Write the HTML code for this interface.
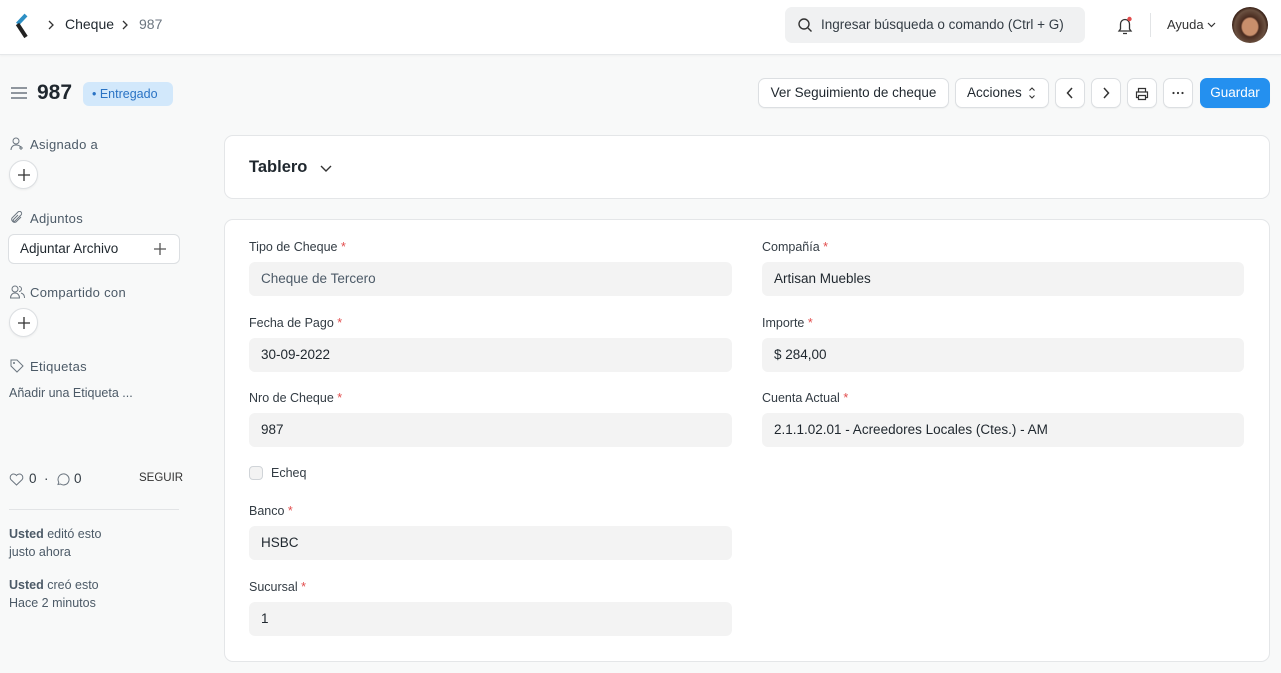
<!DOCTYPE html>
<html><head><meta charset="utf-8"><style>
*{box-sizing:border-box;margin:0;padding:0}
body{width:1281px;height:673px;overflow:hidden;background:#f8f9f9;font-family:"Liberation Sans",sans-serif;color:#1f272e;font-size:13px;position:relative}
.abs{position:absolute}
.nav{left:0;top:0;width:1281px;height:55px;background:#fff;border-bottom:1px solid #e6e8ea;box-shadow:0 1px 2px rgba(0,0,0,.04)}
.search{left:785px;top:7px;width:300px;height:36px;background:#f0f1f2;border-radius:7px;color:#333c44;font-size:13.5px;line-height:36px;padding-left:36px}
.btn{position:absolute;top:78px;height:30px;background:#fff;border:1px solid #dcdfe2;border-radius:7px;font-size:13.5px;line-height:28px;text-align:center;color:#1f272e;box-shadow:0 1px 1px rgba(0,0,0,.04)}
.btn svg{display:block;margin:8px auto 0}
.card{position:absolute;background:#fff;border:1px solid #e4e6e8;border-radius:9px}
.lbl{position:absolute;font-size:12.5px;color:#333c44}
.lbl b{color:#e24c4c;font-weight:normal}
.inp{position:absolute;height:34px;width:483px;background:#f3f3f3;border-radius:6px;font-size:13.5px;line-height:34px;padding-left:12px;color:#1f272e}
.side{position:absolute;left:9px;font-size:13px;color:#4c5a67;letter-spacing:.3px}
.circ{position:absolute;left:9px;width:29px;height:29px;border-radius:50%;background:#fff;border:1px solid #dcdfe2;box-shadow:0 1px 2px rgba(0,0,0,.06)}
.circ svg{display:block;margin:8px auto 0}
.sm{position:absolute;left:9px;font-size:12.5px;color:#4c5a67;line-height:18px}
</style></head><body>
<div class="abs nav"></div>
<svg class="abs" style="left:14px;top:13px" width="16" height="26" viewBox="0 0 16 26"><path d="M12 2 L3.5 11" stroke="#2d8fc4" stroke-width="4" fill="none"/><path d="M3.5 11 L12 24" stroke="#222" stroke-width="4" fill="none"/></svg>
<svg class="abs" style="left:47px;top:20px" width="8" height="10"><path d="M2 1l4 4-4 4" stroke="#333" stroke-width="1.3" fill="none"/></svg>
<div class="abs" style="left:65px;top:16px;font-size:14px;color:#1f272e">Cheque</div>
<svg class="abs" style="left:121px;top:20px" width="8" height="10"><path d="M2 1l4 4-4 4" stroke="#333" stroke-width="1.3" fill="none"/></svg>
<div class="abs" style="left:139px;top:16px;font-size:14px;color:#6c7680">987</div>
<div class="abs search">Ingresar búsqueda o comando (Ctrl + G)</div>
<svg class="abs" style="left:797px;top:17px" width="16" height="16" viewBox="0 0 16 16"><circle cx="7" cy="7" r="5" stroke="#333" stroke-width="1.4" fill="none"/><path d="M11 11l3.5 3.5" stroke="#333" stroke-width="1.4"/></svg>
<svg class="abs" style="left:1115px;top:15px" width="20" height="22" viewBox="0 0 20 22"><path d="M4 16 L5.5 14 V9 a4.5 4.5 0 0 1 9 0 V14 L16 16 Z M8 18.5 h4" stroke="#333" stroke-width="1.3" fill="none"/><circle cx="14.5" cy="4" r="2.2" fill="#e24c4c"/></svg>
<div class="abs" style="left:1150px;top:13px;width:1px;height:24px;background:#e2e4e6"></div>
<div class="abs" style="left:1167px;top:17px;font-size:13px;color:#333">Ayuda</div>
<svg class="abs" style="left:1207px;top:22px" width="9" height="6"><path d="M1 1l3.5 3.5L8 1" stroke="#333" stroke-width="1.2" fill="none"/></svg>
<div class="abs" style="left:1232px;top:7px;width:36px;height:36px;border-radius:50%;background:radial-gradient(ellipse at 50% 55%,#c98f6c 0 30%,#4a2c20 36%,#6a5040 60%,#3a2218 70%)"></div>

<svg class="abs" style="left:11px;top:86px" width="16" height="14"><path d="M0 2h16M0 7h16M0 12h16" stroke="#6c7680" stroke-width="1.5"/></svg>
<div class="abs" style="left:37px;top:81px;font-size:21px;font-weight:bold;color:#1f272e">987</div>
<div class="abs" style="left:83px;top:82px;width:90px;height:24px;background:#d2e8fb;border-radius:6px;color:#2a73c4;font-size:12.5px;line-height:24px;padding-left:9px">• Entregado</div>

<div class="btn" style="left:758px;width:191px">Ver Seguimiento de cheque</div>
<div class="btn" style="left:955px;width:94px;text-align:left;padding-left:11px">Acciones<svg style="position:absolute;left:72px;top:0;margin:0" width="8" height="28"><path d="M1.5 11.5l2.5-2.5 2.5 2.5M1.5 16.5l2.5 2.5 2.5-2.5" stroke="#333" stroke-width="1.1" fill="none"/></svg></div>
<div class="btn" style="left:1055px;width:30px"><svg width="8" height="12"><path d="M6 1L1.5 6 6 11" stroke="#333" stroke-width="1.5" fill="none"/></svg></div>
<div class="btn" style="left:1091px;width:30px"><svg width="8" height="12"><path d="M2 1l4.5 5L2 11" stroke="#333" stroke-width="1.5" fill="none"/></svg></div>
<div class="btn" style="left:1127px;width:30px"><svg width="14" height="14" viewBox="0 0 14 14"><path d="M3.5 5V1.5h7V5M3.5 10.5H1.5V5h11v5.5h-2M3.5 8.5h7v4h-7z" stroke="#333" stroke-width="1.2" fill="none"/></svg></div>
<div class="btn" style="left:1163px;width:30px"><svg width="14" height="12"><circle cx="2.5" cy="6" r="1.1" fill="#333"/><circle cx="7" cy="6" r="1.1" fill="#333"/><circle cx="11.5" cy="6" r="1.1" fill="#333"/></svg></div>
<div class="btn" style="left:1200px;width:70px;background:#2490ef;border-color:#2490ef;color:#fff">Guardar</div>

<svg class="abs" style="left:10px;top:137px" width="14" height="14" viewBox="0 0 14 14"><circle cx="6" cy="4" r="3" stroke="#6c7680" fill="none"/><path d="M1 13c0-3 2-5 5-5s4 1 4.5 2M11 9v4M9 11h4" stroke="#6c7680" fill="none"/></svg>
<div class="side" style="left:30px;top:137px">Asignado a</div>
<div class="circ" style="top:160px"><svg width="12" height="12"><path d="M6 0v12M0 6h12" stroke="#333" stroke-width="1.3"/></svg></div>
<svg class="abs" style="left:10px;top:211px" width="14" height="14" viewBox="0 0 14 14"><path d="M11 6L6 11a3 3 0 0 1-4-4l6-6a2 2 0 0 1 3 3L5 10a1 1 0 0 1-1.5-1.5L8 4" stroke="#6c7680" fill="none"/></svg>
<div class="side" style="left:30px;top:211px">Adjuntos</div>
<div class="abs" style="left:8px;top:234px;width:172px;height:30px;background:#fff;border:1px solid #dcdfe2;border-radius:6px;font-size:13.5px;line-height:28px;padding-left:11px;color:#1f272e">Adjuntar Archivo<svg style="position:absolute;right:13px;top:8px" width="12" height="12"><path d="M6 0v12M0 6h12" stroke="#555" stroke-width="1.3"/></svg></div>
<svg class="abs" style="left:10px;top:285px" width="15" height="14" viewBox="0 0 15 14"><circle cx="5" cy="4" r="3" stroke="#6c7680" fill="none"/><path d="M0.5 13c0-3 2-5 4.5-5s4.5 2 4.5 5zM9 1.5a2.5 2.5 0 0 1 0 5M11 8c2 .5 3.5 2 3.5 5" stroke="#6c7680" fill="none"/></svg>
<div class="side" style="left:30px;top:285px">Compartido con</div>
<div class="circ" style="top:308px"><svg width="12" height="12"><path d="M6 0v12M0 6h12" stroke="#333" stroke-width="1.3"/></svg></div>
<svg class="abs" style="left:10px;top:359px" width="14" height="14" viewBox="0 0 14 14"><path d="M1 1h6l6 6-6 6-6-6z" stroke="#6c7680" fill="none"/><circle cx="4" cy="4" r="1" fill="#6c7680"/></svg>
<div class="side" style="left:30px;top:359px">Etiquetas</div>
<div class="sm" style="top:384px">Añadir una Etiqueta ...</div>
<svg class="abs" style="left:9px;top:473px" width="15" height="13" viewBox="0 0 15 13"><path d="M7.5 12L1.8 6.5a3 3 0 0 1 5.7-4 3 3 0 0 1 5.7 4z" stroke="#6c7680" fill="none"/></svg>
<div class="abs" style="left:29px;top:471px;font-size:13.5px;color:#333c44">0&nbsp;&nbsp;·</div>
<svg class="abs" style="left:55px;top:472px" width="15" height="15" viewBox="0 0 15 15"><path d="M3 12.5l.8-2.3A5.5 5.5 0 1 1 5.5 12z" stroke="#6c7680" fill="none"/></svg>
<div class="abs" style="left:74px;top:471px;font-size:13.5px;color:#333c44">0</div>
<div class="abs" style="left:139px;top:472px;font-size:11.5px;color:#333">SEGUIR</div>
<div class="abs" style="left:9px;top:509px;width:170px;height:1px;background:#e2e4e6"></div>
<div class="sm" style="top:525px"><b>Usted</b> editó esto<br>justo ahora</div>
<div class="sm" style="top:576px"><b>Usted</b> creó esto<br>Hace 2 minutos</div>

<div class="card" style="left:224px;top:135px;width:1046px;height:64px"></div>
<div class="abs" style="left:249px;top:158px;font-size:16.5px;font-weight:bold">Tablero</div>
<svg class="abs" style="left:320px;top:165px" width="12" height="8"><path d="M1 1l5 5 5-5" stroke="#333" stroke-width="1.4" fill="none"/></svg>

<div class="card" style="left:224px;top:219px;width:1046px;height:443px"></div>
<div class="lbl" style="left:249px;top:240px">Tipo de Cheque <b>*</b></div>
<div class="inp" style="left:249px;top:262px;color:#4c5a67">Cheque de Tercero</div>
<div class="lbl" style="left:249px;top:316px">Fecha de Pago <b>*</b></div>
<div class="inp" style="left:249px;top:338px">30-09-2022</div>
<div class="lbl" style="left:249px;top:391px">Nro de Cheque <b>*</b></div>
<div class="inp" style="left:249px;top:413px">987</div>
<div class="abs" style="left:249px;top:466px;width:14px;height:14px;border:1px solid #d0d4d8;border-radius:4px;background:#f3f3f3"></div>
<div class="lbl" style="left:271px;top:466px">Echeq</div>
<div class="lbl" style="left:249px;top:504px">Banco <b>*</b></div>
<div class="inp" style="left:249px;top:526px">HSBC</div>
<div class="lbl" style="left:249px;top:580px">Sucursal <b>*</b></div>
<div class="inp" style="left:249px;top:602px">1</div>

<div class="lbl" style="left:762px;top:240px">Compañía <b>*</b></div>
<div class="inp" style="left:762px;top:262px;width:482px">Artisan Muebles</div>
<div class="lbl" style="left:762px;top:316px">Importe <b>*</b></div>
<div class="inp" style="left:762px;top:338px;width:482px">$ 284,00</div>
<div class="lbl" style="left:762px;top:391px">Cuenta Actual <b>*</b></div>
<div class="inp" style="left:762px;top:413px;width:482px">2.1.1.02.01 - Acreedores Locales (Ctes.) - AM</div>
</body></html>
